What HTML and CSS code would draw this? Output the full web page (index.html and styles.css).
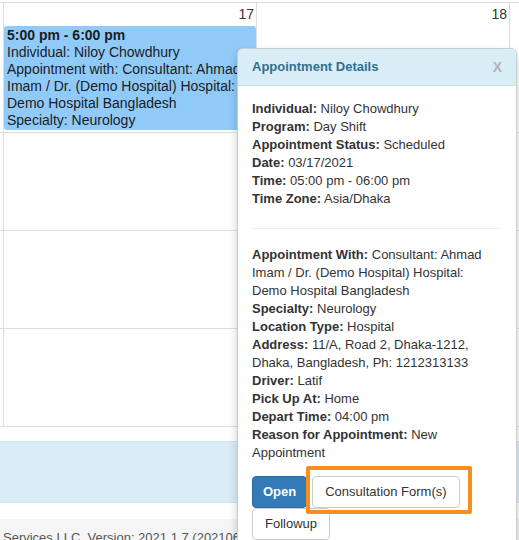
FILE: index.html
```html
<!DOCTYPE html>
<html lang="en">
<head>
    <meta charset="UTF-8">
    <meta name="viewport" content="width=device-width, initial-scale=1.0">
    <title>Calendar</title>
    <link rel="stylesheet" href="styles.css">
</head>
<body>
    <div class="calendar">
      <div class="week week-first">
        <div class="day">
          <div class="day-number">17</div>
          <div class="event">
            <b>5:00 pm - 6:00 pm</b><br>
            Individual: Niloy Chowdhury<br>
            Appointment with: Consultant: Ahmad Imam / Dr. (Demo Hospital) Hospital: Demo Hospital Bangladesh<br>
            Specialty: Neurology
          </div>
        </div>
        <div class="day">
          <div class="day-number">18</div>
        </div>
        <div class="day"></div>
      </div>
      <div class="week">
        <div class="day"></div>
        <div class="day"></div>
        <div class="day"></div>
      </div>
      <div class="week">
        <div class="day"></div>
        <div class="day"></div>
        <div class="day"></div>
      </div>
      <div class="week">
        <div class="day"></div>
        <div class="day"></div>
        <div class="day"></div>
      </div>
    </div>

    <div class="info-band"></div>

    <div class="footer">Services LLC. Version: 2021.1.7 (20210606.01)</div>

    <div class="popover">
      <div class="popover-title">
        <span>Appointment Details</span>
        <span class="popover-close">X</span>
      </div>
      <div class="popover-content">
        <div class="details">
          <b>Individual:</b> Niloy Chowdhury<br>
          <b>Program:</b> Day Shift<br>
          <b>Appointment Status:</b> Scheduled<br>
          <b>Date:</b> 03/17/2021<br>
          <b>Time:</b> 05:00 pm - 06:00 pm<br>
          <b>Time Zone:</b> Asia/Dhaka
        </div>
        <hr>
        <div class="details">
          <b>Appointment With:</b> Consultant: Ahmad Imam / Dr. (Demo Hospital) Hospital: Demo Hospital Bangladesh<br>
          <b>Specialty:</b> Neurology<br>
          <b>Location Type:</b> Hospital<br>
          <b>Address:</b> 11/A, Road 2, Dhaka-1212, Dhaka, Bangladesh, Ph: 1212313133<br>
          <b>Driver:</b> Latif<br>
          <b>Pick Up At:</b> Home<br>
          <b>Depart Time:</b> 04:00 pm<br>
          <b>Reason for Appointment:</b> New Appointment
        </div>
        <div class="actions">
          <button class="btn btn-primary">Open</button>
          <span class="highlight"><button class="btn">Consultation Form(s)</button></span>
          <button class="btn">Followup</button>
        </div>
      </div>
    </div>
</body>
</html>
```

FILE: styles.css
```css
body {
  margin: 0;
  font-family: "Liberation Sans", Arial, sans-serif;
  color: #333;
  background: #fff;
}

/* calendar grid */
.calendar {
  margin-top: 2px;
  border-top: 1px solid #ddd;
}

.week {
  display: grid;
  grid-template-columns: 253px 253px 1fr;
  padding-left: 3px;
  height: 97px;
  border-bottom: 1px solid #ddd;
}

.week-first {
  height: 129px;
}

.day {
  border-left: 1px solid #ddd;
  min-width: 0;
}

.day-number {
  text-align: right;
  font-size: 14px;
  line-height: 17px;
  padding: 3px 2px 0 0;
  color: #333;
}

.event {
  margin-top: 3px;
  padding: 1px 3px;
  background-color: #90caf9;
  border-radius: 3px;
  font-size: 14px;
  line-height: 17px;
  color: #1c1c1c;
}

.info-band {
  margin-top: 14px;
  height: 60px;
  background-color: #d9edf7;
  border-top: 1px solid #c6e4f1;
  border-bottom: 1px solid #c6e4f1;
}

.footer {
  margin-top: 16px;
  background-color: #f5f5f5;
  padding: 10px 3px;
  font-size: 13px;
  line-height: 18px;
  color: #555;
  white-space: nowrap;
}

/* popover */
.popover {
  position: absolute;
  left: 237px;
  top: 48px;
  width: 278px;
  background: #fff;
  border: 1px solid rgba(0, 0, 0, 0.2);
  border-radius: 6px;
  box-shadow: 0 5px 10px rgba(0, 0, 0, 0.2);
  font-size: 13px;
  line-height: 18px;
}

.popover-title {
  display: flex;
  justify-content: space-between;
  padding: 9px 14px 9px 14px;
  background-color: #d9edf7;
  border-bottom: 1px solid #c9e2ee;
  border-radius: 5px 5px 0 0;
  color: #31708f;
  font-weight: bold;
}

.popover-close {
  color: #b5b5b5;
  font-size: 14px;
}

.popover-content {
  padding: 14px 15px 9px 14px;
}

.popover-content hr {
  margin: 20px 0 17px;
  border: 0;
  border-top: 1px solid #eee;
}

.actions {
  display: flex;
  flex-wrap: wrap;
  column-gap: 5px;
  margin-top: 14px;
}

.btn {
  padding: 6px 12px;
  font-family: inherit;
  font-size: 13px;
  line-height: 18px;
  color: #333;
  background-color: #fff;
  border: 1px solid #ccc;
  border-radius: 4px;
}

.btn-primary {
  padding: 6px 10px;
  color: #fff;
  font-weight: bold;
  background-color: #337ab7;
  border-color: #2e6da4;
}

.highlight {
  position: relative;
  display: flex;
}

.highlight::after {
  content: "";
  position: absolute;
  left: -6px;
  right: -12px;
  top: -10px;
  bottom: -6px;
  border: 4px solid #f78f1e;
  border-radius: 2px;
}
```
